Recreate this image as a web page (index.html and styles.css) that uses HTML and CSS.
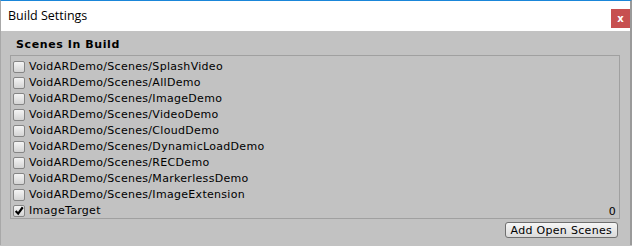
FILE: index.html
```html
<!DOCTYPE html>
<html lang="en">
<head>
  <meta charset="UTF-8" />
  <title>Build Settings</title>
  <link rel="stylesheet" href="styles.css">
</head>
<body>
  <div class="window">
    <header class="titlebar">
      <span class="title">Build Settings</span>
      <button class="close">x</button>
    </header>

    <main class="content">
      <h2 class="section-title">Scenes In Build</h2>

      <ul class="scene-list">
        <li><span class="check"></span><span class="name">VoidARDemo/Scenes/SplashVideo</span></li>
        <li><span class="check"></span><span class="name">VoidARDemo/Scenes/AllDemo</span></li>
        <li><span class="check"></span><span class="name">VoidARDemo/Scenes/ImageDemo</span></li>
        <li><span class="check"></span><span class="name">VoidARDemo/Scenes/VideoDemo</span></li>
        <li><span class="check"></span><span class="name">VoidARDemo/Scenes/CloudDemo</span></li>
        <li><span class="check"></span><span class="name">VoidARDemo/Scenes/DynamicLoadDemo</span></li>
        <li><span class="check"></span><span class="name">VoidARDemo/Scenes/RECDemo</span></li>
        <li><span class="check"></span><span class="name">VoidARDemo/Scenes/MarkerlessDemo</span></li>
        <li><span class="check"></span><span class="name">VoidARDemo/Scenes/ImageExtension</span></li>
        <li>
          <span class="check checked">
            <svg viewBox="0 0 12 12" width="12" height="12"><path d="M2 6 L5 9.2 L10.5 1.5" fill="none" stroke="#000" stroke-width="2.6"/></svg>
          </span>
          <span class="name">ImageTarget</span>
          <span class="index">0</span>
        </li>
      </ul>

      <div class="actions">
        <button class="btn">Add Open Scenes</button>
      </div>
    </main>
  </div>
</body>
</html>
```

FILE: styles.css
```css
html, body {
  margin: 0;
  width: 632px;
  height: 246px;
  overflow: hidden;
  background: #c2c2c2;
}
.window {
  height: 245px;
  border-top: 1px solid #1a86d9;
  border-left: 1px solid #a8a8a8;
  border-right: 2px solid #9a9a9a;
  box-sizing: border-box;
}
.titlebar {
  height: 30px;
  background: #fff;
  display: flex;
  align-items: center;
  justify-content: space-between;
  padding-left: 7px;
}
.title {
  font-family: "Open Sans", "Noto Sans", sans-serif;
  font-size: 12.5px;
  color: #000;
  margin-top: -1px;
}
.close {
  width: 19px;
  height: 19px;
  margin-right: 0;
  margin-top: 4px;
  padding: 0;
  border: none;
  background: #c75050;
  color: #fff;
  font-family: "DejaVu Sans", sans-serif;
  font-weight: bold;
  font-size: 10px;
  line-height: 17px;
}
.content {
  font-family: "DejaVu Sans", sans-serif;
  font-size: 11px;
  letter-spacing: 0.3px;
  color: #000;
}
.section-title {
  margin: 0;
  height: 24px;
  padding: 7px 0 0 15px;
  box-sizing: border-box;
  font-size: 11px;
  font-weight: bold;
  letter-spacing: 0.6px;
  line-height: 13px;
}
.scene-list {
  list-style: none;
  margin: 0 10px 0 9px;
  padding: 3px 0 0 0;
  height: 164px;
  box-sizing: border-box;
  border: 1px solid #a0a0a0;
  background: #c2c2c2;
}
.scene-list li {
  height: 16px;
  display: flex;
  align-items: center;
  padding-left: 2px;
}
.check {
  width: 10px;
  height: 10px;
  border: 1px solid #858585;
  border-radius: 2px;
  background: linear-gradient(#f4f4f4, #d4d4d4);
  display: flex;
  align-items: center;
  justify-content: center;
  flex-shrink: 0;
}
.check svg {
  display: block;
}
.name {
  margin-left: 4px;
  line-height: 16px;
}
.index {
  margin-left: auto;
  margin-right: 3px;
}
.actions {
  display: flex;
  justify-content: flex-end;
  padding: 3px 12px 0 0;
}
.btn {
  height: 16px;
  padding: 0 5px;
  border: 1px solid #6f6f6f;
  border-radius: 3px;
  background: linear-gradient(#f6f6f6, #dadada);
  font-family: "DejaVu Sans", sans-serif;
  font-size: 11px;
  letter-spacing: 0.3px;
  line-height: 13px;
  color: #000;
}
```
